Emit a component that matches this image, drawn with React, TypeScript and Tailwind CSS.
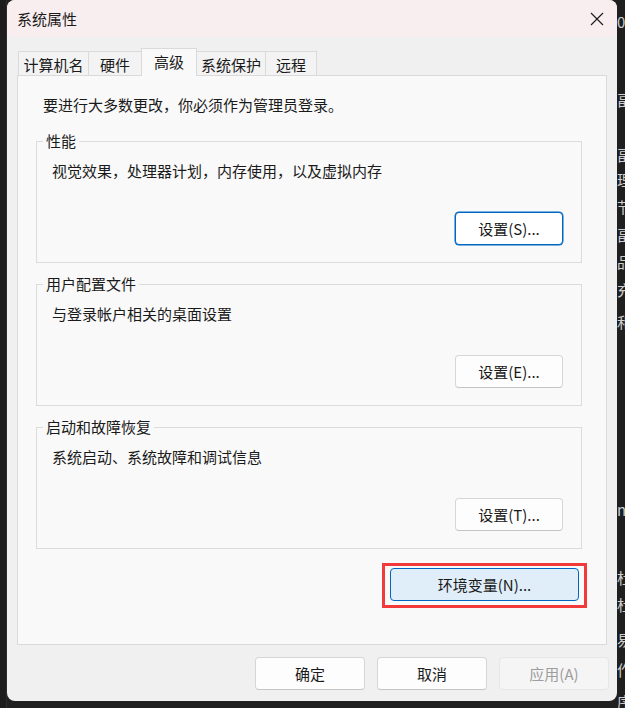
import React from 'react'

const FONT = "font-['Microsoft_YaHei_UI','Noto_Sans_CJK_SC',sans-serif]"

const TABS = [
  { label: '计算机名', w: 'w-[71px]' },
  { label: '硬件', w: 'w-[54px]' },
  { label: '高级', w: 'w-[56px]', active: true },
  { label: '系统保护', w: 'w-[70px]' },
  { label: '远程', w: 'w-[52px]' },
]

// glyphs from the window behind, clipped at the right edge
const BEHIND = [
  { ch: '0', cls: 'mt-[14px]' },
  { ch: '畐', cls: 'mt-[63px]' },
  { ch: '畐', cls: 'mt-[40px]' },
  { ch: '理', cls: 'mt-[10px]' },
  { ch: '节', cls: 'mt-[12px]' },
  { ch: '畐', cls: 'mt-[13px]' },
  { ch: '品', cls: 'mt-[12px]' },
  { ch: '充', cls: 'mt-[13px]' },
  { ch: '和', cls: 'mt-[17px]' },
  { ch: 'n', cls: 'mt-[173px]' },
  { ch: '杜', cls: 'mt-[53px]' },
  { ch: '杜', cls: 'mt-[12px]' },
  { ch: '易', cls: 'mt-[20px]' },
  { ch: '作', cls: 'mt-[15px]' },
  { ch: '序', cls: 'mt-[17px]' },
]

function Button({ children, focus, primary, disabled, w }: { children: React.ReactNode; focus?: boolean; primary?: boolean; disabled?: boolean; w: string }) {
  let cls = 'bg-[#fdfdfd] border border-[#d6d6d6] border-b-[#c4c4c4] text-[#1a1a1a]'
  if (focus) cls = 'bg-white border border-[#0067c0] shadow-[0_0_0_0.5px_#0067c0] text-[#1a1a1a]'
  if (primary) cls = 'bg-[#e0eef9] border border-[#0067c0] text-[#1a1a1a]'
  if (disabled) cls = 'bg-[#f5f5f5] border border-[#e6e6e6] text-[#9d9d9d]'
  return (
    <div className={`${w} h-[33px] rounded-[4px] flex items-center justify-center text-[15px] leading-none ${cls}`}>
      {children}
    </div>
  )
}

function Group({ title, desc, btn, focus }: { title: string; desc: string; btn: string; focus?: boolean }) {
  return (
    <fieldset className="ml-[18px] w-[546px] border border-[#dcdcdc] pb-[17px]">
      <legend className="ml-[6px] px-[3px] text-[15px] leading-[20px] text-[#1a1a1a]">{title}</legend>
      <p className="mt-[10px] ml-[15px] text-[15px] leading-[20px] text-[#1a1a1a]">{desc}</p>
      <div className="mt-[31px] flex justify-end pr-[18px]">
        <Button w="w-[108px]" focus={focus}>{btn}</Button>
      </div>
    </fieldset>
  )
}

export default function App() {
  return (
    <div className={`w-[625px] h-[708px] bg-[#1f1f1f] flex items-start overflow-hidden ${FONT}`}>
      <div className="w-[7px] h-full bg-[#1c1c1c] border-r border-[#2c2c2c]" />

      {/* dialog */}
      <div className="w-[610px] h-[701px] bg-[#f0f0f0] rounded-lg flex flex-col overflow-hidden">
        <div className="h-[37px] bg-[#f8eef0] flex items-center justify-between pl-[10px] pr-[13px]">
          <span className="text-[15px] leading-none text-[#1a1a1a]">系统属性</span>
          <svg width="14" height="14" viewBox="0 0 14 14" className="text-[#1a1a1a]">
            <path d="M1 1 L13 13 M13 1 L1 13" stroke="currentColor" strokeWidth="1.1" />
          </svg>
        </div>

        {/* tabs */}
        <div className="pt-[11px] pl-[11px] flex items-end h-[38px]">
          {TABS.map((t, i) => (
            <div
              key={t.label}
              className={`${t.w} flex items-center justify-center text-[15px] leading-none text-[#1a1a1a] border border-b-0 border-[#dadada] ${i > 0 ? '-ml-px' : ''} ${
                t.active ? 'h-[28px] bg-[#f9f9f9] relative z-10 -mb-px pb-[2px]' : 'h-[24px] bg-[#f3f3f3] pt-[1px]'
              }`}
            >
              {t.label}
            </div>
          ))}
        </div>

        {/* panel */}
        <div className="ml-[10px] w-[590px] h-[570px] border border-[#dadada] bg-[#f9f9f9] flex flex-col">
          <p className="pt-[19px] pl-[25px] text-[15px] leading-[20px] text-[#1a1a1a]">要进行大多数更改，你必须作为管理员登录。</p>
          <div className="mt-[16px] flex flex-col gap-[11px]">
            <Group title="性能" desc="视觉效果，处理器计划，内存使用，以及虚拟内存" btn="设置(S)..." focus />
            <Group title="用户配置文件" desc="与登录帐户相关的桌面设置" btn="设置(E)..." />
            <Group title="启动和故障恢复" desc="系统启动、系统故障和调试信息" btn="设置(T)..." />
          </div>
          <div className="mt-[14px] flex justify-end pr-[19px]">
            <div className="border-[3px] border-[#f23a3a] px-[5px] pt-[2px] pb-[4px]">
              <Button w="w-[189px]" primary>环境变量(N)...</Button>
            </div>
          </div>
        </div>

        {/* footer */}
        <div className="pt-[12px] pr-[8px] flex justify-end gap-[12px]">
          <Button w="w-[110px]">确定</Button>
          <Button w="w-[110px]">取消</Button>
          <Button w="w-[110px]" disabled>应用(A)</Button>
        </div>
      </div>

      <div className="w-[8px] h-full bg-[#1f1f1f] overflow-hidden flex flex-col text-[15px] leading-[15px] text-[#cfcfcf] whitespace-nowrap">
        {BEHIND.map((b, i) => (
          <div key={i} className={`h-[15px] ${b.cls}`}>{b.ch}</div>
        ))}
      </div>
    </div>
  )
}
